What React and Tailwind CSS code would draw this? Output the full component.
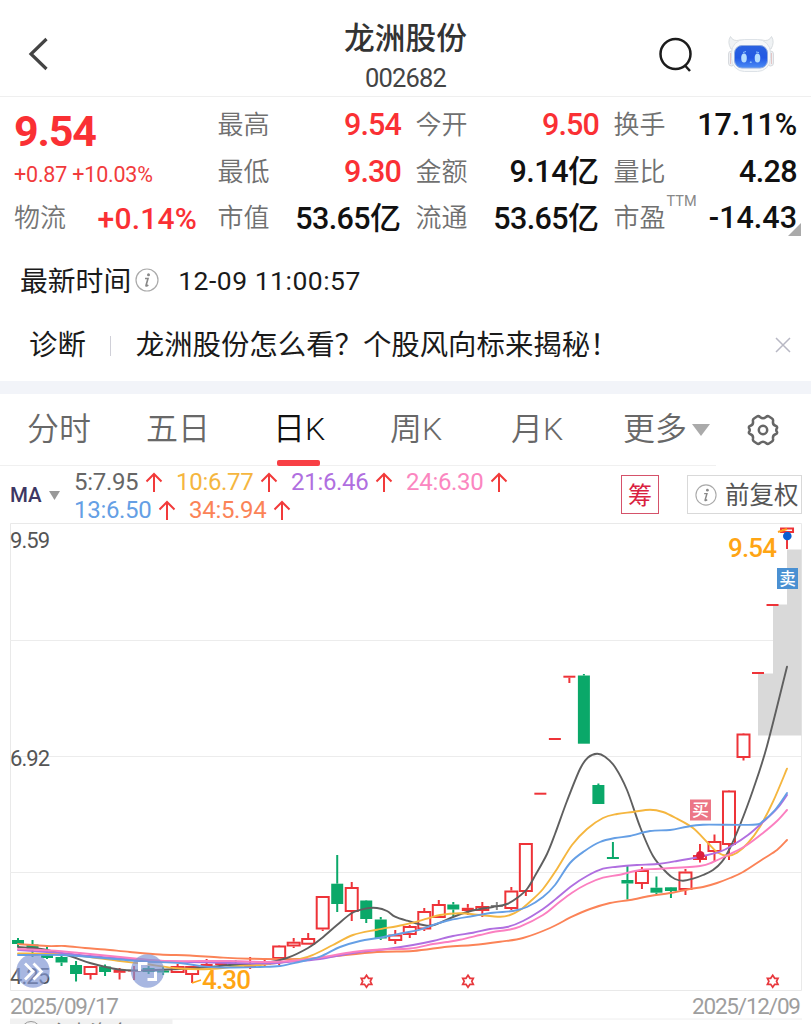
import { useState } from "react";

const stats = [
    [
        { label: "最高", value: "9.54", red: true, track: "tracking-[-0.9px]" },
        { label: "最低", value: "9.30", red: true, track: "tracking-[-0.9px]" },
        { label: "市值", value: "53.65", unit: "亿", track: "tracking-[-0.6px]" },
    ],
    [
        { label: "今开", value: "9.50", red: true, track: "tracking-[-0.9px]" },
        { label: "金额", value: "9.14", unit: "亿", track: "tracking-[-0.5px]" },
        { label: "流通", value: "53.65", unit: "亿", track: "tracking-[-0.6px]" },
    ],
    [
        { label: "换手", value: "17.11%", track: "tracking-[-0.1px]" },
        { label: "量比", value: "4.28", track: "tracking-[-0.6px]" },
        { label: "市盈", value: "-14.43", sup: "TTM", track: "tracking-[0px]" },
    ],
];

const tabs = [
    { name: "分时", box: "w-[119px]" },
    { name: "五日", box: "w-[127px]" },
    { name: "日K", box: "w-[117px]" },
    { name: "周K", box: "w-[121px]" },
    { name: "月K", box: "w-[112px]" },
];

const averages = [
    [
        { text: "5:7.95", color: "text-[#666666]", box: "w-[66px]" },
        { text: "10:6.77", color: "text-[#f5b63f]", box: "w-[79px]" },
        { text: "21:6.46", color: "text-[#b06fe0]", box: "w-[79px]" },
        { text: "24:6.30", color: "text-[#fb86c0]", box: "w-[79px]" },
    ],
    [
        { text: "13:6.50", color: "text-[#659fe5]", box: "w-[79px]" },
        { text: "34:5.94", color: "text-[#fb8357]", box: "w-[79px]" },
    ],
];

// type: r = hollow red, f = solid red, g = green, x = flat day
// [type, body top, body bottom, high, low]
const candles = [
    ["g", 940, 944, 938, 947],
    ["g", 944.5, 949, 940, 957],
    ["g", 955, 958, 947, 959],
    ["g", 957, 962.5, 956, 966],
    ["g", 965, 974, 961, 981.5],
    ["r", 966, 975, 966, 979.5],
    ["g", 966.5, 972, 964.5, 976],
    ["f", 969.5, 972.8, 968, 979.5],
    ["f", 970, 971.5, 966, 980],
    ["g", 968, 972, 966, 974],
    ["g", 970.5, 972.5, 966.5, 975],
    ["r", 966, 973, 964, 973],
    ["r", 966, 975, 966, 983],
    ["f", 964, 967, 959, 967],
    ["f", 962, 965, 962, 966],
    ["g", 963, 966, 960, 968],
    ["f", 965, 968, 957, 969],
    ["f", 962, 965, 959.5, 967],
    ["r", 945.5, 959, 945, 965],
    ["r", 941.7, 946.5, 938, 948],
    ["r", 938, 944.7, 933, 944],
    ["r", 896, 929.5, 896, 931],
    ["g", 883.7, 904, 855, 912],
    ["r", 887, 912, 882, 921],
    ["g", 900.5, 919, 900, 923],
    ["g", 919.5, 938.5, 917, 940],
    ["r", 934.5, 941, 930, 944],
    ["r", 926, 935, 925, 938],
    ["r", 911, 929.5, 908, 931],
    ["r", 904, 918, 900, 918],
    ["g", 904.5, 909.5, 902, 916],
    ["f", 907.8, 911, 904, 915],
    ["r", 906, 911, 902, 917],
    ["x", 905, 907, 902, 910],
    ["r", 890.5, 909, 887, 910],
    ["r", 843, 892, 843, 896],
    ["f", 792.7, 794.7, 793, 794],
    ["f", 738, 740, 738, 740],
    ["f", 675.7, 677.7, 676, 683],
    ["g", 675.5, 743.7, 674, 743],
    ["g", 785, 804, 783.5, 804],
    ["g", 857, 859, 842, 859],
    ["g", 880, 883.5, 865, 899.5],
    ["r", 870, 884, 867, 889],
    ["g", 887.7, 892.7, 876.5, 894],
    ["g", 887.3, 891, 887, 898],
    ["r", 871.5, 890, 869, 895],
    ["r", 855, 860, 844, 862.5],
    ["r", 841, 852, 834.5, 862],
    ["r", 790.5, 845, 790, 860],
    ["r", 733.5, 758, 733, 760.5],
    ["f", 672, 674, 672, 674],
    ["f", 604, 606, 604, 606],
    ["r", 527.5, 533, 528, 549],
];

const lines = [
    {
        color: "#fb8357",
        pts: [18,944,47,946,65,946,85,948,105,949.5,130,952,160,954.5,190,955.5,220,957.5,250,958.7,300,959,327,957,377,952,413,951,447,946.7,473,945,500,941.7,523,938,550,928,572,916.7,590,909,610,903,630,900,650,896,670,893,690,889,703,887,717,883,730,878,743,872,763,859,777,850,787,840],
    },
    {
        color: "#5f5f5f",
        pts: [18,947,32,948,47,950,70,956,90,963,119,969.5,140,970.5,180,969,210,967,235,964.5,265,963,287,958,308,948,322,938,337,925,352,913,366,908.5,377,908,387,911,395,916.7,407,920.7,427,925.7,437,924,453,917,467,912,480,909,493,907,507,904,517,898,527,889,536,874,547,854,555,834,567,801,580,769,588,757.5,597,753.7,605,756.7,615,767,627,790,640,826.7,653,856,667,873,675,879,683,880.7,693,878.7,703,875,713,870,722,861.7,730,848,740,825,753,790,767,746,787,666.7],
    },
    {
        color: "#f5b63f",
        pts: [18,953.5,62,954,90,957,120,961,145,964,180,968.5,210,969,240,966,265,964.5,300,959,315,954,333,945,353,935,377,929.7,403,925,427,918.7,440,915,460,913.3,477,914.7,500,916.7,510,915,520,910,530,901.7,543,889,557,869,572,845,587,829,603,818,617,814,633,812,650,809.7,663,812,677,818.7,693,828,707,842,718,852.7,728,855.7,737,852.7,748,843,760,826.7,773,801.7,787,768.7],
    },
    {
        color: "#b06fe0",
        pts: [18,950,47,952,62,953,90,956,120,958.5,150,960.5,190,962,265,963.5,287,962,320,959,353,953,387,949,413,945,433,941,453,936,473,932.7,490,929,507,927,523,921,543,909,557,898,572,885.7,587,876,603,868.7,617,866.7,637,865,657,864,677,861,700,856.7,720,851.7,733,845,748,835,763,822,777,808.7,787,795],
    },
    {
        color: "#fb7fc0",
        pts: [18,949,50,950.5,80,953,110,956,140,959,165,961,230,961,265,962,287,961.3,320,957.5,353,952,380,949.5,410,948.5,433,944,447,942,460,939.7,480,935,493,932,507,930,520,926.7,543,915,557,904,572,892.7,587,884,603,877.7,620,874.7,640,870,660,868.7,700,866,713,862,730,854,747,845,763,833,777,821,787,810],
    },
    {
        color: "#659fe5",
        pts: [18,955,62,955,90,957,120,959.5,145,961.5,180,963,200,966,220,967.5,260,967,280,966,300,961.7,320,956.7,340,947,360,941,380,937.7,403,933,420,929.7,433,925,450,920,473,916,493,912.7,513,911,527,907,543,897,555,885,570,863,585,850.7,600,842,615,838,630,836,650,831,670,830,687,826.7,703,824.7,753,824.7,763,821,775,810,787,793],
    },
];

// smooth curve through all the points
const toPath = (p) => {
    let d = `M${p[0]} ${p[1]}`;
    for (let i = 0; i < p.length - 2; i += 2) {
        const x1 = p[i], y1 = p[i + 1], x2 = p[i + 2], y2 = p[i + 3];
        const x0 = i ? p[i - 2] : x1;
        const y0 = i ? p[i - 1] : y1;
        const x3 = i + 4 < p.length ? p[i + 4] : x2;
        const y3 = i + 4 < p.length ? p[i + 5] : y2;
        d += `C${x1 + (x2 - x0) / 6} ${y1 + (y2 - y0) / 6} ${x2 - (x3 - x1) / 6} ${y2 - (y3 - y1) / 6} ${x2} ${y2}`;
    }
    return d;
};

function InfoIcon({ className }) {
    return (
        <svg className={className} viewBox="0 0 24 24" fill="none">
            <circle cx="12" cy="12" r="11" stroke="#aaa" strokeWidth="1.2" />
            <circle cx="13.5" cy="6.8" r="1.5" fill="#888" />
            <path d="M10 10.5h3L11 17.5q-.2 1.3 2.3-.5" stroke="#888" strokeWidth="1.6" />
        </svg>
    );
}

function Robot() {
    return (
        <svg className="w-[48px] h-[40px]" viewBox="0 0 48 40">
            <defs>
                <linearGradient id="face" x1="0" y1="0" x2="0" y2="1">
                    <stop offset="0" stopColor="#2a62df" />
                    <stop offset=".55" stopColor="#2358e4" />
                    <stop offset="1" stopColor="#4c8df6" />
                </linearGradient>
            </defs>
            <path d="M4 15Q0 8 3.500 2.500Q6 8 13 6H35Q42 8 44.500 2.500Q48 8 44 15Z" fill="#eff2f4" stroke="#d9dde0" />
            <rect x="1.5" y="17" width="6" height="15" rx="3" fill="#eef0f3" stroke="#d7dade" />
            <rect x="40.5" y="17" width="6" height="15" rx="3" fill="#eef0f3" stroke="#d7dade" />
            <path d="M3.5 19v11M44.5 19v11" stroke="#e4c5c5" />
            <rect x="4.5" y="5.5" width="39" height="32" rx="13" fill="#f6f8f9" stroke="#dde2e7" />
            <rect x="7.5" y="11.500" width="33" height="22.500" rx="7.500" fill="url(#face)" stroke="#8fa9de" />
            <ellipse cx="17" cy="24" rx="2.800" ry="4.500" fill="#b5dcff" />
            <ellipse cx="30.500" cy="24" rx="2.800" ry="4.500" fill="#b5dcff" />
            <path d="M16 18.500l3-1M29 18l3 .5M23 28h1.500l-.8 1z" stroke="#8fc3ff" />
        </svg>
    );
}

function Candle({ index, data }) {
    const [type, top, bottom, high, low] = data;
    const x = 18 + index * 14.51;
    const color = type === "g" ? "#0aa869" : type === "x" ? "#888" : "#ee3338";
    return (
        <g stroke={color} fill={color}>
            {high < top && <path d={`M${x} ${high}V${top}`} strokeWidth="2" />}
            {low > bottom && <path d={`M${x} ${bottom}V${low}`} strokeWidth="2" />}
            {type === "r" ? (
                <rect x={x - 6} y={top + 1} width="12" height={bottom - top - 2} fill="#fff" strokeWidth="2" />
            ) : (
                <rect x={x - 6} y={top} width="12" height={bottom - top} stroke="none" />
            )}
        </g>
    );
}

function Chart() {
    return (
        <svg className="block w-[811px] h-[501px] font-[Roboto,'Noto_Sans_CJK_SC',sans-serif]" viewBox="0 523 811 501">
            <path d="M10.5 523.5H801.5V990.5H10.5Z" fill="none" stroke="#e9e9e9" />
            <path d="M10 640.5H801M10 756.5H801M10 872.5H801" stroke="#ececec" />
            <path d="M787 549.5H801.5V735.5H758V673.5H773V604.5H787Z" fill="#d9d9d9" />

            {candles.map((c, i) => <Candle key={i} index={i} data={c} />)}
            {lines.map((l) => (
                <path key={l.color} d={toPath(l.pts)} fill="none" stroke={l.color} strokeWidth="1.9" strokeLinecap="round" />
            ))}

            {/* event stars */}
            {[366.5, 468, 772.7].map((x) => (
                <path
                    key={x}
                    transform={`translate(${x} 981.3)`}
                    d="M0-6L2-3H5.3L3.8 0L5.3 3H2L0 6L-2 3H-5.3L-3.8 0L-5.3-3H-2Z"
                    fill="#fff"
                    stroke="#e8383d"
                    strokeWidth="1.7"
                />
            ))}

            {/* buy / sell marks */}
            <circle cx="700.3" cy="855.3" r="4.3" fill="#dd1f3d" />
            <rect x="690" y="799.5" width="21" height="21" fill="#ec7686" />
            <text x="700.5" y="816" fontSize="17" fontWeight="500" textAnchor="middle" fill="#fff">买</text>
            <path d="M778 532l9-3" stroke="#ffa21c" strokeWidth="2" />
            <circle cx="787.3" cy="536" r="4.3" fill="#0a5fd0" />
            <rect x="777" y="568" width="21" height="21" fill="#4a90d2" />
            <text x="787.5" y="584.5" fontSize="16.5" fontWeight="500" textAnchor="middle" fill="#fff">卖</text>

            <text x="728" y="556.5" fontSize="26" fontWeight="500" fill="#ffa514" textLength="49">9.54</text>
            <path d="M192 983l9-3" stroke="#ffa514" strokeWidth="1.5" />
            <text x="202" y="988.5" fontSize="26" fontWeight="500" fill="#ffa514" textLength="49">4.30</text>

            <g fontSize="22" fill="#555">
                <text x="10" y="547.5" textLength="40">9.59</text>
                <text x="10" y="766" textLength="40">6.92</text>
                <text x="10" y="983.5" textLength="40">4.25</text>
            </g>
            <g fontSize="22.5" fill="#9e9e9e">
                <text x="10" y="1013.5" textLength="109">2025/09/17</text>
                <text x="692" y="1013.5" textLength="109">2025/12/09</text>
            </g>

            {/* floating controls */}
            <circle cx="33" cy="971" r="16.7" fill="#7f95d3" fillOpacity=".68" />
            <path d="M25 963.5l8 8-8 8M33.5 963.5l8 8-8 8" fill="none" stroke="#fff" strokeWidth="2.7" />
            <circle cx="147.5" cy="971" r="16.7" fill="#7f95d3" fillOpacity=".68" />
            <path d="M139.5 971v-7.500h8M155.5 972v7.500h-8" fill="none" stroke="#fff" strokeWidth="3" />

            {/* next indicator strip */}
            <path d="M10 1019H802" stroke="#eee" />
            <rect x="10" y="1019" width="162.5" height="5" fill="#f1f1f1" />
            <circle cx="31" cy="1031" r="9.5" fill="none" stroke="#999" />
            <text x="50" y="1040" fontSize="20" fill="#777">主力资金</text>
        </svg>
    );
}

export default function App() {
    const [active, setActive] = useState("日K");

    return (
        <div className="w-[811px] h-[1024px] overflow-hidden bg-white text-[#1a1a1a] font-[Roboto,'Noto_Sans_CJK_SC',sans-serif]">
            {/* Header */}
            <header className="h-[97px] flex items-start border-b border-[#efefef]">
                <div className="w-[240px] pl-[28px] pt-[37px]">
                    <svg className="w-[22px] h-[34px]" viewBox="0 0 22 34" fill="none" stroke="#444" strokeWidth="3.2">
                        <path d="M18.5 2L3 17L18.5 32" />
                    </svg>
                </div>
                <div className="w-[331px] pt-[20px] text-center">
                    <h1 className="text-[30.7px] leading-[38px] font-medium text-[#333]">龙洲股份</h1>
                    <p className="text-[25.5px] leading-[40px] tracking-[-0.8px] text-[#444]">002682</p>
                </div>
                <div className="flex-1 flex pl-[87px] pt-[34px]">
                    <svg className="w-[36px] h-[40px] mr-[33px]" viewBox="0 0 36 40" fill="none" stroke="#1c1c1c" strokeWidth="2.5">
                        <circle cx="17.5" cy="20" r="15" />
                        <path d="M27 31.5l5 5.5" />
                    </svg>
                    <Robot />
                </div>
            </header>

            {/* Quote */}
            <section className="h-[147px] pt-[4px] flex">
                <div className="w-[183px] ml-[14px]">
                    <div className="h-[54px] pt-[7px] text-[43px] leading-[47px] font-bold tracking-[-1.2px] text-[#fa3034]">9.54</div>
                    <div className="h-[40px] text-[21.5px] leading-[40px] tracking-[-0.2px] whitespace-nowrap text-[#f13b3c]">+0.87 +10.03%</div>
                    <div className="h-[46px] flex justify-between items-center">
                        <span className="text-[26px] text-[#757575] font-[350]">物流</span>
                        <span className="text-[30px] font-medium tracking-[0.2px] text-[#fa3034]">+0.14%</span>
                    </div>
                </div>
                <div className="ml-[20.5px] pt-[1px] flex gap-[14.5px]">
                    {stats.map((col, i) => (
                        <div key={i} className="w-[183.5px]">
                            {col.map((s) => (
                                <div key={s.label} className="h-[46.5px] flex justify-between items-center leading-none">
                                    <span className="relative text-[26px] font-[350] text-[#707070]">
                                        {s.label}
                                        {s.sup && (
                                            <span className="absolute left-[53px] top-[-10px] text-[14.5px] leading-none font-normal text-[#888]">{s.sup}</span>
                                        )}
                                    </span>
                                    <span className={`text-[30.5px] font-medium ${s.track} ${s.red ? "text-[#fa3034]" : "text-[#111]"}`}>
                                        {s.value}
                                        {s.unit && <span className="text-[31px] tracking-normal">{s.unit}</span>}
                                    </span>
                                </div>
                            ))}
                        </div>
                    ))}
                </div>
                <svg className="w-[13px] h-[13px] ml-[-9px] mt-[122px] shrink-0" viewBox="0 0 13 13">
                    <path d="M13 0V13H0Z" fill="#aaa" />
                </svg>
            </section>

            <div className="h-[72px] pl-[20px] flex items-center text-[27.8px]">
                <span className="pt-[3px]">最新时间</span>
                <InfoIcon className="w-[24px] h-[24px] ml-[4px] mr-[19px]" />
                <span className="pt-[1px] text-[26.5px] tracking-[0.5px]">12-09 11:00:57</span>
            </div>

            {/* Diagnosis banner */}
            <div className="h-[65px] pb-[8px] pl-[29px] pr-[20px] flex items-center text-[28.4px]">
                <span className="pt-[3px]">诊断</span>
                <span className="w-px h-[20px] mt-[3px] bg-[#d0d0d8] ml-[24px] mr-[25px]"></span>
                <span className="pt-[3px] whitespace-nowrap">龙洲股份怎么看？个股风向标来揭秘！</span>
                <svg className="w-[16px] h-[16px] ml-auto shrink-0" viewBox="0 0 16 16" stroke="#b8b8c4" strokeWidth="1.5">
                    <path d="M1 1L15 15M15 1L1 15" />
                </svg>
            </div>
            <div className="h-[13px] bg-[#f2f4f9]"></div>

            {/* Period tabs */}
            <nav className="h-[72px] pl-[27px] flex text-[32px] font-[350] text-[#686868]">
                {tabs.map((t) => (
                    <button
                        key={t.name}
                        onClick={() => setActive(t.name)}
                        className={`${t.box} h-[72px] flex flex-col items-start shrink-0 ${active === t.name ? "text-[#111]" : ""}`}
                    >
                        <span className="h-[66px] leading-[70px]">{t.name}</span>
                        {active === t.name && <span className="w-[43px] h-[6px] ml-[4px] rounded-[2px] bg-[#f83f45]"></span>}
                    </button>
                ))}
                <button className="h-[72px] flex items-start shrink-0">
                    <span className="leading-[70px]">更多</span>
                    <svg className="w-[18px] h-[12px] ml-[5px] mt-[30px]" viewBox="0 0 18 12">
                        <path d="M0 0H18L9 12Z" fill="#aaa" />
                    </svg>
                </button>
                <svg className="w-[34px] h-[34px] ml-[36px] mt-[19px] shrink-0" viewBox="0 0 34 34" fill="none" stroke="#666" strokeWidth="2.5" strokeLinejoin="round">
                    <path d="M11 3.5Q12.5 2.5 14 4Q17 6.500 20 4Q21.5 2.5 23 3.5L26 5.5Q27.5 6.5 27 8.5Q26.500 12 30 13Q31.5 13.5 31 15Q29.500 17 31 19Q31.5 20.5 30 21Q26.500 22 27 25.5Q27.5 27.5 26 28.5L23 30.5Q21.5 31.5 20 30Q17 27.500 14 30Q12.5 31.5 11 30.5L8 28.5Q6.5 27.5 7 25.5Q7.500 22 4 21Q2.5 20.5 3 19Q4.500 17 3 15Q2.5 13.5 4 13Q7.500 12 7 8.5Q6.5 6.5 8 5.5Z" />
                    <circle cx="17" cy="17" r="4.2" />
                </svg>
            </nav>
            <div className="w-[716px] h-px mt-[-1px] bg-[#f0f0f0]"></div>

            {/* Moving averages */}
            <section className="h-[57px] flex">
                <div className="w-[64px] pl-[10px] pt-[2px] flex items-center text-[20.5px] font-medium text-[#3d3763]">
                    MA
                    <svg className="w-[11px] h-[9px] ml-[7px]" viewBox="0 0 11 9">
                        <path d="M0 0H11L5.5 9Z" fill="#999" />
                    </svg>
                </div>
                <div className="w-[557px] pl-[10px] pt-[2px]">
                    {averages.map((row, i) => (
                        <div key={i} className="h-[28px] flex items-center">
                            {row.map((m) => (
                                <div key={m.text} className="flex items-center mr-[13px]">
                                    <span className={`${m.box} ${m.color} text-[24px] leading-[28px] tracking-[-0.3px]`}>{m.text}</span>
                                    <svg className="w-[18px] h-[20px] ml-[5px]" viewBox="0 0 18 20" fill="none" stroke="#f23a3a" strokeWidth="2">
                                        <path d="M9 20V2M1.5 9.5L9 2L16.5 9.5" />
                                    </svg>
                                </div>
                            ))}
                        </div>
                    ))}
                </div>
                <div className="flex items-start pt-[9px]">
                    <button className="w-[38px] h-[39px] pt-[2px] border border-[#d5526a] text-[24px] leading-[37px] text-[#d9213f]">筹</button>
                    <button className="w-[115px] h-[39px] ml-[28px] pl-[7px] flex items-center border border-[#d9d9d9] text-[24.5px] text-[#555] whitespace-nowrap">
                        <InfoIcon className="w-[22px] h-[22px] mr-[8px] shrink-0" />
                        <span className="pt-[4px]">前复权</span>
                    </button>
                </div>
            </section>

            <Chart />
        </div>
    );
}
